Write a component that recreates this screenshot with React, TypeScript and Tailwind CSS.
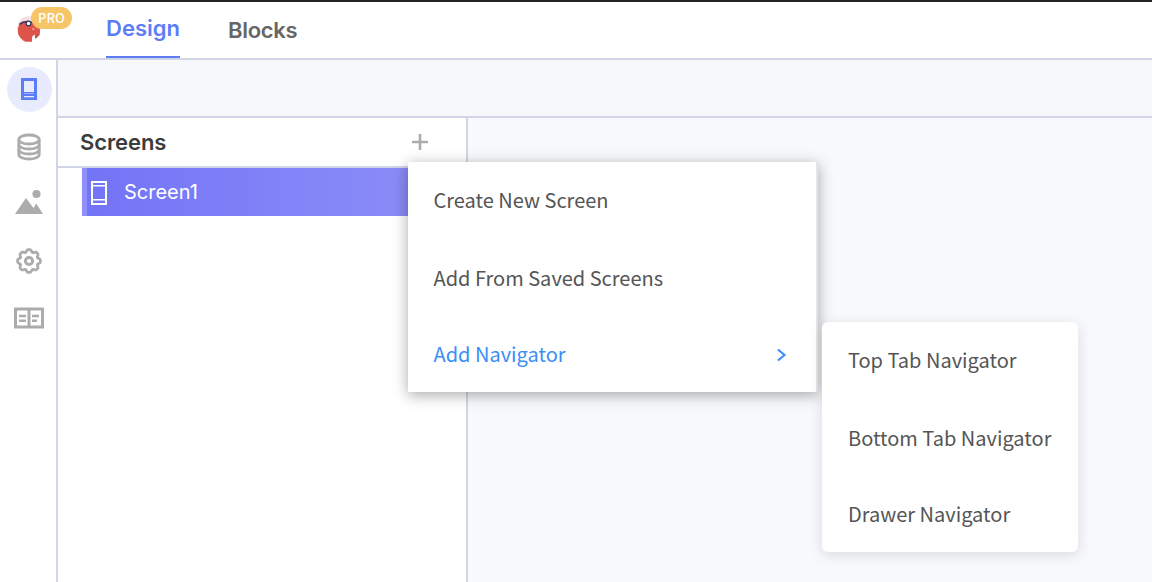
import React from "react";

const sans = "font-['Inter','Liberation_Sans',sans-serif]";
const menuFont = "font-['Noto_Sans_CJK_SC','Noto_Sans',sans-serif]";

const gearPath =
  Array.from({ length: 96 }, (_, i) => {
    const a = (i / 96) * Math.PI * 2;
    const r = 10.5 + 1.15 * Math.cos(8 * a) + 0.25 * Math.cos(16 * a + Math.PI);
    return `${i ? "L" : "M"}${(14 + r * Math.sin(a)).toFixed(2)} ${(14 - r * Math.cos(a)).toFixed(2)}`;
  }).join("") + "Z";

function Logo() {
  return (
    <svg className="absolute left-4 top-[13px]" width="27" height="28" viewBox="0 0 27 28">
      <circle cx="12.800" cy="12.500" r="11.300" fill="#f3dfde" />
      <path d="M5 7.500C2.500 10 1.500 13 1.800 17c.7 4.500 3.700 8 7.700 9.800h6.500l6-5.800 2-3c.5-3-.5-7-3-9L16 6.500H8z" fill="#dc544a" />
      <path d="M3.500 9.500c2.500-2.500 5-3 8-3 3.500 0 5.500 1 8 3" fill="none" stroke="#4c3b5e" strokeWidth="1.700" />
      <circle cx="12.500" cy="8.500" r="3" fill="#39345a" />
      <circle cx="12.500" cy="8.500" r="1.700" fill="#fff" />
      <circle cx="17.300" cy="14" r="1" fill="#f7a79c" />
      <path d="M16 27v-5l2.300-2.500.7 2v5.500z" fill="#fff" />
      <path d="M19 22l3.500-3.500 1.500 1-4 4z" fill="#b5544f" />
    </svg>
  );
}

function Rail() {
  return (
    <nav className="flex w-[58px] shrink-0 flex-col items-center border-r-2 border-[#d1d6e6] bg-white pl-[2px] pt-[6px]">
      <div className="flex size-[46px] items-center justify-center">
        <div className="flex size-[45px] shrink-0 items-center justify-center rounded-full bg-[#e8ebfd]">
          <svg width="16" height="22" viewBox="0 0 16 22">
            <path fill="#5c7df7" d="M0 0h16v22H0z" />
            <path fill="#e8ebfd" d="M3 3h10v11H3z" />
            <path fill="#9db0fa" d="M3 15h10v1H3z" />
            <path fill="#e8ebfd" d="M3 18h10v1.300H3z" />
          </svg>
        </div>
      </div>
      <svg className="mt-[20px] h-[30px] w-[26px]" viewBox="0 0 26 30" fill="none" stroke="#acacac" strokeWidth="2.800">
        <ellipse cx="13" cy="7.500" rx="10.200" ry="4.500" />
        <path d="M2.800 7.500v15c0 2.500 4.500 4.500 10.200 4.500s10.200-2 10.200-4.500v-15" />
        <path d="M2.800 12.500c0 2.500 4.500 4.500 10.200 4.500s10.200-2 10.200-4.500M2.800 17.500c0 2.500 4.500 4.500 10.200 4.500s10.200-2 10.200-4.500" />
      </svg>
      <svg className="mt-[27px] h-[26px] w-[30px]" viewBox="0 0 30 26" fill="#acacac">
        <circle cx="22.500" cy="5" r="4.100" />
        <path d="M1 25 12 9l7.500 10 2.700-4.500L29 25z" />
      </svg>
      <svg className="mt-[32px] size-[28px]" viewBox="0 0 28 28" fill="none" stroke="#acacac" strokeLinejoin="round">
        <path d={gearPath} strokeWidth="2.800" />
        <circle cx="14" cy="14" r="3.600" strokeWidth="3" />
      </svg>
      <svg className="mt-[32px] h-[22px] w-[30px]" viewBox="0 0 30 22" fill="none" stroke="#acacac">
        <path d="M1.500 2h27v18h-27zM15 2v18" strokeWidth="3" />
        <path d="M5 9h7M5 13.700h7M18 9h7M18 13.700h5" strokeWidth="2.600" />
      </svg>
    </nav>
  );
}

function MenuItem({ label, active = false, className }: { label: string; active?: boolean; className: string }) {
  return (
    <div
      className={`flex h-[77px] items-center justify-between whitespace-nowrap text-[20px] leading-[30px] ${active ? "text-[#3a8ef6]" : "text-[#555555]"} ${className}`}
    >
      <span>{label}</span>
      {active && (
        <svg className="mr-[28px] mt-px" width="12" height="14" viewBox="0 0 12 14" fill="none" stroke="#3a8ef6" strokeWidth="2.200">
          <path d="m2 1.500 6.500 5.500L2 12.500" />
        </svg>
      )}
    </div>
  );
}

export default function App() {
  return (
    <div className={`relative flex h-[582px] w-[1152px] flex-col overflow-hidden border-t-2 border-[#242424] bg-white ${sans}`}>
      <header className="flex h-[58px] shrink-0 border-b-2 border-[#d1d6e6]">
        <div className="w-[106px] shrink-0">
          <Logo />
          <span className="absolute left-[31px] top-[5px] flex h-[22px] w-[41px] items-center justify-center rounded-full bg-[#f6c567] pb-px font-['Noto_Sans_CJK_SC','Noto_Sans',sans-serif] text-[13px] font-medium leading-none text-white">
            PRO
          </span>
        </div>
        <nav className="flex gap-12 text-[22px] font-semibold">
          <div className="flex h-[56px] w-[74px] items-center border-b-2 border-[#5c7df7] pb-[2px] text-[#5c7df7]">Design</div>
          <div className="flex h-[56px] items-center tracking-[-0.3px] text-[#666666]">Blocks</div>
        </nav>
      </header>
      <div className="flex min-h-0 flex-1">
        <Rail />
        <div className="flex min-w-0 flex-1 flex-col">
          <div className="h-[58px] shrink-0 border-b-2 border-[#d1d6e6] bg-[#f6f8fc]" />
          <div className="flex min-h-0 flex-1">
            <aside className="w-[410px] shrink-0 border-r-2 border-[#d1d6e6]">
              <div className="flex h-[50px] items-center justify-between border-b-2 border-[#d1d6e6] pl-[22px] pr-[38px]">
                <h2 className="text-[22px] font-semibold tracking-[-0.1px] text-[#3c3c3c]">Screens</h2>
                <svg width="16" height="16" viewBox="0 0 16 16" stroke="#acacac" strokeWidth="2.600">
                  <path d="M8 0v16M0 8h16" />
                </svg>
              </div>
              <div className="ml-6 flex h-12 items-center border-l-[5px] border-[#908ffa] bg-linear-to-r from-[#7374f6] to-[#8f90f8] pl-1 text-white">
                <svg className="mt-[2px]" width="16" height="24" viewBox="0 0 16 24" fill="none" stroke="#fff">
                  <path d="M1 1h14v22H1z" strokeWidth="2" />
                  <path d="M1 4.700h14M1 18.700h14" strokeWidth="1.400" />
                </svg>
                <span className="ml-[17px] text-[20px] leading-[24px]">Screen1</span>
              </div>
            </aside>
            <main className="flex-1 bg-[#f7f9fc]" />
          </div>
        </div>
      </div>
      <div className={`absolute left-[408px] top-[160px] h-[230px] w-[410px] border-r-2 border-[#e3e4e8] bg-white pl-[25.500px] shadow-[0_3px_14px_rgba(0,0,0,0.34)] ${menuFont}`}>
        <MenuItem label="Create New Screen" className="pb-[2px]" />
        <MenuItem label="Add From Saved Screens" className="pb-0" />
        <MenuItem label="Add Navigator" active className="pb-px" />
      </div>
      <div className={`absolute left-[822px] top-[320px] h-[230px] w-[256px] rounded-md bg-white pl-[26px] shadow-[0_3px_14px_rgba(0,0,0,0.13)] ${menuFont}`}>
        <MenuItem label="Top Tab Navigator" className="pb-[2px]" />
        <MenuItem label="Bottom Tab Navigator" className="pb-0" />
        <MenuItem label="Drawer Navigator" className="pb-px" />
      </div>
    </div>
  );
}
